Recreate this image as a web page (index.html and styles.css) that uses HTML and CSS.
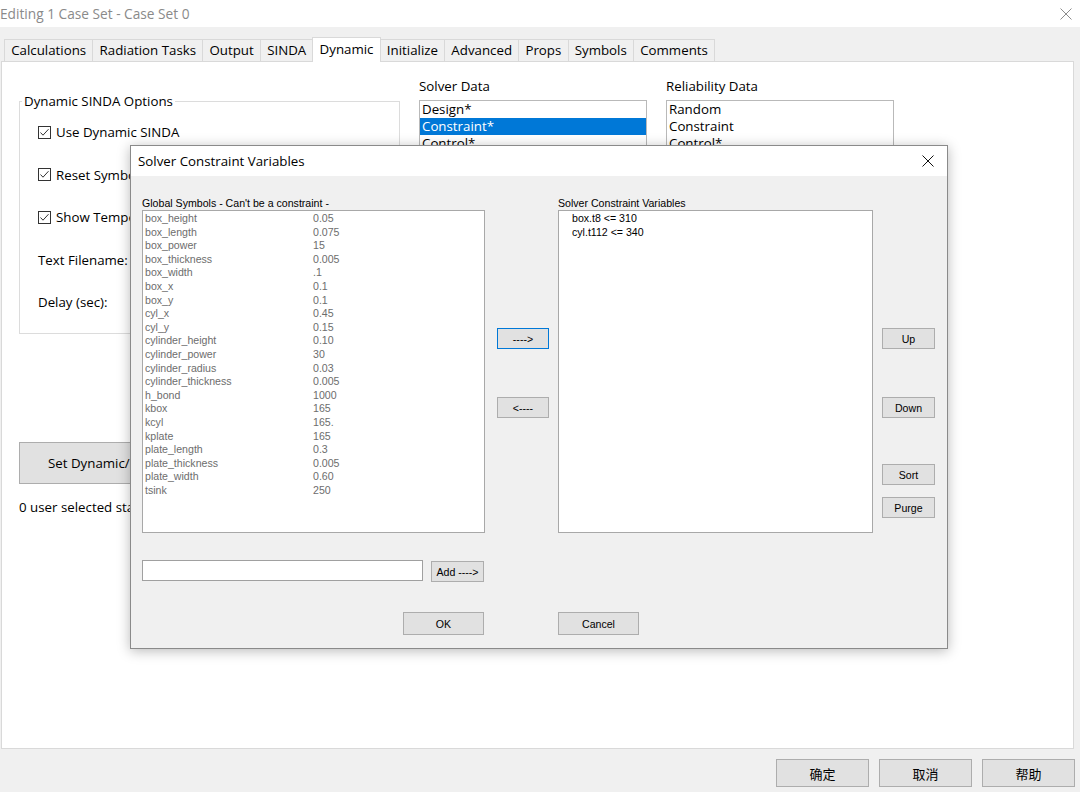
FILE: index.html
```html
<!DOCTYPE html>
<html lang="en">
<head>
<meta charset="UTF-8">
<title>Editing 1 Case Set - Case Set 0</title>
<link rel="stylesheet" href="styles.css">
</head>
<body>

<div class="window">
    <div class="titlebar">
        <span class="title">Editing 1 Case Set - Case Set 0</span>
        <svg class="win-close" width="12" height="12" viewBox="0 0 12 12"><path d="M0.5 0.5L11.5 11.5M11.5 0.5L0.5 11.5" stroke="#8c8c8c" stroke-width="1"/></svg>
    </div>

    <div class="tabs">
        <span class="tab">Calculations</span>
        <span class="tab">Radiation Tasks</span>
        <span class="tab">Output</span>
        <span class="tab">SINDA</span>
        <span class="tab active">Dynamic</span>
        <span class="tab">Initialize</span>
        <span class="tab">Advanced</span>
        <span class="tab">Props</span>
        <span class="tab">Symbols</span>
        <span class="tab">Comments</span>
    </div>

    <div class="panel">
        <div class="panel-top">
            <fieldset class="group">
                <legend>Dynamic SINDA Options</legend>
                <div class="opt-row"><span class="check"><svg width="13" height="13" viewBox="0 0 13 13"><path d="M2.5 6.5L5 9.2L10.5 3.2" fill="none" stroke="#333" stroke-width="1"/></svg></span>Use Dynamic SINDA</div>
                <div class="opt-row"><span class="check"><svg width="13" height="13" viewBox="0 0 13 13"><path d="M2.5 6.5L5 9.2L10.5 3.2" fill="none" stroke="#333" stroke-width="1"/></svg></span>Reset Symbols</div>
                <div class="opt-row"><span class="check"><svg width="13" height="13" viewBox="0 0 13 13"><path d="M2.5 6.5L5 9.2L10.5 3.2" fill="none" stroke="#333" stroke-width="1"/></svg></span>Show Temperatures</div>
                <div class="opt-row">Text Filename:</div>
                <div class="opt-row">Delay (sec):</div>
            </fieldset>

            <div class="data-col">
                <div class="data-label">Solver Data</div>
                <ul class="listbox">
                    <li>Design*</li>
                    <li class="selected">Constraint*</li>
                    <li>Control*</li>
                    <li>Random*</li>
                </ul>
            </div>

            <div class="data-col">
                <div class="data-label">Reliability Data</div>
                <ul class="listbox">
                    <li>Random</li>
                    <li>Constraint</li>
                    <li>Control*</li>
                </ul>
            </div>
        </div>

        <button class="wide-btn">Set Dynamic/Static</button>
        <div class="status">0 user selected states</div>
    </div>

    <div class="footer">
        <button class="foot-btn">确定</button>
        <button class="foot-btn">取消</button>
        <button class="foot-btn">帮助</button>
    </div>

    <!-- modal dialog on top of the tab page -->
    <div class="dialog">
        <div class="dlg-title">
            <span>Solver Constraint Variables</span>
            <svg width="12" height="12" viewBox="0 0 12 12"><path d="M0.5 0.5L11.5 11.5M11.5 0.5L0.5 11.5" stroke="#111" stroke-width="1"/></svg>
        </div>
        <div class="dlg-body">
            <div class="dlg-lists">
                <div class="sym-col">
                    <div class="small-label">Global Symbols - Can't be a constraint -</div>
                    <div class="sym-list" id="symList"></div>
                </div>
                <div class="move-col">
                    <button class="small-btn focused first">----&gt;</button>
                    <button class="small-btn second">&lt;----</button>
                </div>
                <div class="con-col">
                    <div class="small-label">Solver Constraint Variables</div>
                    <div class="con-list">
                        <div class="con-item">box.t8 &lt;= 310</div>
                        <div class="con-item">cyl.t112 &lt;= 340</div>
                    </div>
                </div>
                <div class="order-col">
                    <button class="small-btn first">Up</button>
                    <button class="small-btn second">Down</button>
                    <button class="small-btn third">Sort</button>
                    <button class="small-btn fourth">Purge</button>
                </div>
            </div>

            <div class="add-row">
                <input class="add-input" type="text">
                <button class="small-btn add-btn">Add ----&gt;</button>
            </div>

            <div class="ok-row">
                <button class="small-btn ok-btn">OK</button>
                <button class="small-btn cancel-btn">Cancel</button>
            </div>
        </div>
    </div>
</div>

<script>
const symbols = [
    ['box_height', '0.05'],
    ['box_length', '0.075'],
    ['box_power', '15'],
    ['box_thickness', '0.005'],
    ['box_width', '.1'],
    ['box_x', '0.1'],
    ['box_y', '0.1'],
    ['cyl_x', '0.45'],
    ['cyl_y', '0.15'],
    ['cylinder_height', '0.10'],
    ['cylinder_power', '30'],
    ['cylinder_radius', '0.03'],
    ['cylinder_thickness', '0.005'],
    ['h_bond', '1000'],
    ['kbox', '165'],
    ['kcyl', '165.'],
    ['kplate', '165'],
    ['plate_length', '0.3'],
    ['plate_thickness', '0.005'],
    ['plate_width', '0.60'],
    ['tsink', '250']
];

const list = document.getElementById('symList');
symbols.forEach(([name, value]) => {
    const row = document.createElement('div');
    row.className = 'sym-row';
    row.innerHTML = `<span class="sym-name">${name}</span><span>${value}</span>`;
    list.appendChild(row);
});
</script>

</body>
</html>
```

FILE: styles.css
```css
body {
    margin: 0;
}

.window {
    position: relative;
    width: 1080px;
    height: 792px;
    overflow: hidden;
    background-color: #f0f0f0;
    font-family: "Open Sans", "Noto Sans", sans-serif;
    font-size: 13.3px;
    color: #000;
}

.titlebar {
    height: 27px;
    background-color: #fff;
    display: flex;
    align-items: center;
    justify-content: space-between;
    padding-right: 8px;
}

.title {
    font-size: 13.7px;
    color: #8a8a8a;
}

/* tab strip */
.tabs {
    display: flex;
    align-items: flex-end;
    height: 24px;
    margin: 10px 0 0 4px;
}

.tab {
    position: relative;
    height: 21px;
    line-height: 21px;
    padding: 0 6.2px;
    border: 1px solid #d9d9d9;
    border-bottom: none;
    margin-right: -1px;
    background-color: #f0f0f0;
    white-space: nowrap;
}

.tab.active {
    height: 24px;
    line-height: 23px;
    margin-bottom: -1px;
    background-color: #fff;
    z-index: 1;
}

.panel {
    margin-left: 1px;
    width: 1073px;
    height: 688px;
    box-sizing: border-box;
    border: 1px solid #d9d9d9;
    background-color: #fff;
    padding: 15px 0 0 17px;
}

.panel-top {
    display: flex;
    align-items: flex-start;
    gap: 19px;
}

.group {
    width: 381px;
    box-sizing: border-box;
    margin: 15px 0 0 0;
    padding: 1px 0 9px 18px;
    border: 1px solid #dcdcdc;
}

.group legend {
    padding: 0 2px;
    margin-left: -16px;
    line-height: 18px;
}

.opt-row {
    height: 42.5px;
    display: flex;
    align-items: center;
    white-space: nowrap;
}

.check {
    display: inline-flex;
    width: 13px;
    height: 13px;
    border: 1px solid #333;
    margin-right: 5px;
    box-sizing: border-box;
    align-items: center;
    justify-content: center;
}

.check svg {
    flex: none;
}

.data-col {
    width: 228px;
}

.data-label {
    line-height: 18px;
}

.listbox {
    list-style: none;
    margin: 5px 0 0 0;
    padding: 0;
    height: 110px;
    border: 1px solid #b9b9b9;
}

.listbox li {
    line-height: 17px;
    padding-left: 2px;
}

.listbox li.selected {
    background-color: #0078d7;
    color: #fff;
}

.wide-btn {
    display: block;
    margin-top: 108px;
    width: 381px;
    height: 42px;
    background-color: #e1e1e1;
    border: 1px solid #adadad;
    font: inherit;
    text-align: left;
    padding-left: 28px;
}

.status {
    margin-top: 14px;
    line-height: 18px;
}

.footer {
    display: flex;
    justify-content: flex-end;
    gap: 10px;
    padding: 10px 5px 0 0;
}

.foot-btn {
    width: 93px;
    height: 28px;
    background-color: #e1e1e1;
    border: 1px solid #adadad;
    font-family: "Noto Sans CJK SC", sans-serif;
    font-size: 13px;
    color: #000;
}

/* dialog */
.dialog {
    position: absolute;
    left: 130px;
    top: 145px;
    width: 818px;
    height: 504px;
    box-sizing: border-box;
    border: 1px solid #8a8a8a;
    background-color: #f0f0f0;
    box-shadow: 0 2px 12px rgba(0, 0, 0, 0.28);
    font-family: "Liberation Sans", Arial, sans-serif;
    font-size: 10.6px;
}

.dlg-title {
    height: 30px;
    background-color: #fff;
    display: flex;
    align-items: center;
    justify-content: space-between;
    padding: 0 13px 0 7px;
    font-family: "Open Sans", "Noto Sans", sans-serif;
    font-size: 13.3px;
}

.dlg-body {
    padding: 21px 0 0 11px;
}

.dlg-lists {
    display: flex;
    align-items: flex-start;
}

.small-label {
    line-height: 13px;
    white-space: nowrap;
}

.sym-col {
    width: 343px;
}

.sym-list, .con-list {
    height: 323px;
    box-sizing: border-box;
    border: 1px solid #a8a8a8;
    background-color: #fff;
    padding-top: 1px;
}

.sym-list {
    padding-left: 2px;
    color: #6d6d6d;
}

.sym-row, .con-item {
    height: 13.6px;
    line-height: 13.6px;
    white-space: nowrap;
}

.sym-name {
    display: inline-block;
    width: 168px;
}

.con-list {
    padding-left: 13px;
}

.move-col {
    width: 52px;
    margin-left: 12px;
    display: flex;
    flex-direction: column;
}

.con-col {
    width: 315px;
    margin-left: 9px;
}

.order-col {
    width: 53px;
    margin-left: 9px;
    display: flex;
    flex-direction: column;
}

.small-btn {
    height: 21px;
    padding: 0;
    background-color: #e1e1e1;
    border: 1px solid #adadad;
    font: inherit;
    color: #000;
}

.small-btn.focused {
    border-color: #0078d7;
}

.first {
    margin-top: 131px;
}

.second {
    margin-top: 48px;
}

.third {
    margin-top: 46px;
}

.fourth {
    margin-top: 12px;
}

.add-row {
    display: flex;
    align-items: flex-start;
    margin-top: 27px;
}

.add-input {
    width: 281px;
    height: 21px;
    box-sizing: border-box;
    margin: 0;
    border: 1px solid #a0a0a0;
    background-color: #fff;
}

.add-btn {
    width: 53px;
    margin-left: 8px;
    margin-top: 1px;
}

.ok-row {
    display: flex;
    margin-top: 30px;
}

.ok-btn, .cancel-btn {
    width: 81px;
    height: 23px;
}

.ok-btn {
    margin-left: 261px;
}

.cancel-btn {
    margin-left: 74px;
}
```
